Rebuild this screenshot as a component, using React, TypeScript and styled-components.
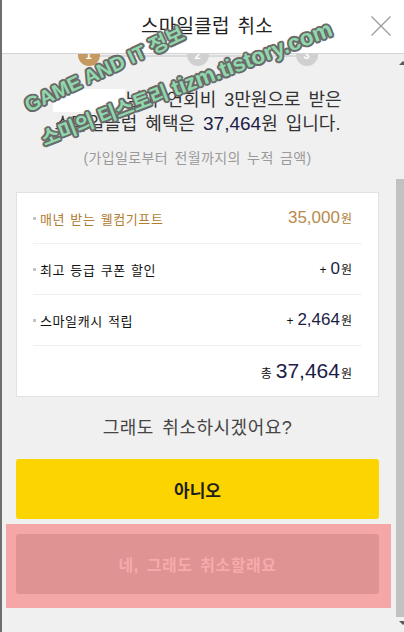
import React from 'react';
import styled, { createGlobalStyle } from 'styled-components';

const GlobalStyle = createGlobalStyle`
  html, body { margin: 0; padding: 0; background: #f0f0f0; overflow: hidden; }
  body { font-family: "Liberation Sans", "Noto Sans CJK KR", sans-serif; }
  * { box-sizing: border-box; }
`;

const Page = styled.div`
  position: relative;
  display: flex;
  width: 404px;
  height: 632px;
  overflow: hidden;
  background: #f0f0f0;
`;

const LeftEdge = styled.div`
  width: 2px;
  flex: none;
  background: #6e6e6e;
`;

const Main = styled.div`
  flex: 1;
  min-width: 0;
  display: flex;
  flex-direction: column;
`;

const Header = styled.header`
  position: relative;
  z-index: 2;
  height: 54px;
  flex: none;
  background: #fff;
  border-bottom: 1px solid #d4d4d4;
  display: grid;
  grid-template-columns: 1fr auto 1fr;
  align-items: center;
  padding: 0 13px 0 21px;
`;

const Title = styled.h1`
  grid-column: 2;
  margin: 0;
  font-size: 19px;
  font-weight: 400;
  color: #222;
  line-height: 24px;
  letter-spacing: 0.3px;
  word-spacing: 2px;
`;

const CloseButton = styled.button`
  grid-column: 3;
  justify-self: end;
  width: 20px;
  height: 20px;
  padding: 0;
  border: none;
  background: none;
  display: flex;
  margin-top: -2px;
`;

const Body = styled.div`
  flex: 1;
  display: flex;
  min-height: 0;
`;

const Content = styled.div`
  flex: 1;
  display: flex;
  flex-direction: column;
  padding: 0 17px 0 14px;
`;

const Steps = styled.div`
  position: relative;
  z-index: 0;
  align-self: center;
  width: 240px;
  margin-top: -10px;
  display: flex;
  justify-content: space-between;
  &::before {
    content: '';
    position: absolute;
    left: 11px;
    right: 11px;
    top: 11px;
    height: 2px;
    background: #d9d9d9;
  }
`;

const StepDot = styled.span<{ $active?: boolean }>`
  position: relative;
  width: 22px;
  height: 22px;
  border-radius: 50%;
  background: ${(p) => (p.$active ? '#c69a5e' : '#d0d0d0')};
  color: #fff;
  font-size: 11px;
  font-weight: 700;
  display: flex;
  align-items: center;
  justify-content: center;
`;

const Message = styled.p`
  margin: 22px 0 0;
  text-align: center;
  font-size: 18px;
  line-height: 24px;
  color: #333;
  word-spacing: 3px;
`;

const Redacted = styled.span`
  display: inline-block;
  width: 72px;
  height: 23px;
  background: #fff;
  vertical-align: top;
  margin-top: 1px;
`;

const Amount = styled.span`
  color: #1c1c48;
  font-size: 19px;
`;

const Note = styled.p`
  margin: 12px 0 0;
  text-align: center;
  font-size: 14px;
  line-height: 20px;
  color: #9a9a9a;
  letter-spacing: 0.4px;
  word-spacing: 2px;
`;

const Card = styled.div`
  margin-top: 24px;
  background: #fff;
  border: 1px solid #e2e2e2;
  padding: 0 16px;
`;

const Row = styled.div<{ $tone?: 'gold' }>`
  height: 51px;
  display: flex;
  align-items: center;
  justify-content: space-between;
  padding-right: 10px;
  border-bottom: 1px solid #f0f0f0;
  color: ${(p) => (p.$tone === 'gold' ? '#b07d33' : '#111')};
  &:last-child {
    height: 50px;
    border-bottom: none;
    justify-content: flex-end;
  }
`;

const Label = styled.span`
  display: flex;
  align-items: center;
  gap: 4px;
  font-size: 13px;
  letter-spacing: 0.6px;
  word-spacing: 1px;
`;

const Bullet = styled.i`
  width: 3px;
  height: 3px;
  background: #c4c4c4;
`;

const Value = styled.span`
  display: flex;
  align-items: baseline;
`;

const Prefix = styled.span`
  font-size: 12px;
  margin-right: 4px;
  color: #111;
`;

const Num = styled.span<{ $big?: boolean; $tone?: 'gold' }>`
  font-size: ${(p) => (p.$big ? '21px' : '17px')};
  color: ${(p) => (p.$tone === 'gold' ? '#b88a4c' : '#1c1c48')};
  margin-left: ${(p) => (p.$big ? '4px' : '0')};
`;

const Unit = styled.span<{ $tone?: 'gold' }>`
  font-size: 12px;
  margin-left: 1px;
  color: ${(p) => (p.$tone === 'gold' ? '#b07d33' : '#111')};
`;

const Question = styled.p`
  margin: 19px 0 0;
  text-align: center;
  font-size: 18px;
  line-height: 24px;
  color: #444;
  letter-spacing: 0.5px;
  word-spacing: 3px;
`;

const KeepButton = styled.button`
  margin-top: 19px;
  width: 100%;
  height: 60px;
  border: none;
  border-radius: 3px;
  background: #fcd400;
  color: #1e1e1e;
  font-family: inherit;
  font-size: 17px;
  font-weight: 700;
`;

const Highlight = styled.div`
  margin: 5px -12px 0 -10px;
  padding: 10px 12px 14px 10px;
  background: #f5a7a7;
`;

const CancelButton = styled.button`
  width: 100%;
  height: 60px;
  border: none;
  border-radius: 3px;
  background: #e09393;
  color: #f7aaaa;
  font-family: inherit;
  font-size: 16px;
  font-weight: 700;
  letter-spacing: 0.5px;
  word-spacing: 3px;
`;

const Scrollbar = styled.div`
  width: 8px;
  flex: none;
  display: flex;
  flex-direction: column;
  overflow: hidden;
`;

const Arrow = styled.span<{ $down?: boolean }>`
  flex: none;
  width: 0;
  height: 0;
  margin: ${(p) => (p.$down ? '4px 0 0 3px' : '7px 0 0 3px')};
  border-left: 4px solid transparent;
  border-right: 4px solid transparent;
  ${(p) => (p.$down ? 'border-top: 4px solid #5a5a5a;' : 'border-bottom: 4px solid #5a5a5a;')}
`;

const Thumb = styled.div`
  flex: none;
  margin-top: 114px;
  height: 438px;
  background: #c1c1c1;
`;

const Watermark = styled.span<{ $angle: number; $size: number }>`
  position: absolute;
  z-index: 5;
  pointer-events: none;
  white-space: nowrap;
  font-family: "Liberation Sans", "Noto Sans CJK KR", sans-serif;
  font-weight: 700;
  font-size: ${(p) => p.$size}px;
  line-height: 1;
  color: #8fd8ab;
  transform-origin: 0 100%;
  transform: rotate(${(p) => p.$angle}deg);
  text-shadow:
    2px 0 0 #6a6a6a, -2px 0 0 #6a6a6a, 0 2px 0 #6a6a6a, 0 -2px 0 #6a6a6a,
    1.4px 1.4px 0 #6a6a6a, -1.4px -1.4px 0 #6a6a6a, 1.4px -1.4px 0 #6a6a6a, -1.4px 1.4px 0 #6a6a6a;
`;

const WatermarkLatin = styled.span`
  font-size: 1.12em;
`;

export default function App() {
  return (
    <>
      <GlobalStyle />
      <Page>
        <LeftEdge />
        <Main>
          <Header>
            <Title>스마일클럽 취소</Title>
            <CloseButton aria-label="닫기">
              <svg width="20" height="20" viewBox="0 0 20 20">
                <path d="M0.5 0.5 L19.5 19.5 M19.5 0.5 L0.5 19.5" stroke="#9a9a9a" strokeWidth="1.2" fill="none" />
              </svg>
            </CloseButton>
          </Header>
          <Body>
            <Content>
              <Steps>
                <StepDot $active>1</StepDot>
                <StepDot>2</StepDot>
                <StepDot>3</StepDot>
              </Steps>
              <Message>
                <Redacted />님이 연회비 3만원으로 받은
                <br />
                스마일클럽 혜택은 <Amount>37,464</Amount>원 입니다.
              </Message>
              <Note>(가입일로부터 전월까지의 누적 금액)</Note>
              <Card>
                <Row $tone="gold">
                  <Label>
                    <Bullet />
                    매년 받는 웰컴기프트
                  </Label>
                  <Value>
                    <Num $tone="gold">35,000</Num>
                    <Unit $tone="gold">원</Unit>
                  </Value>
                </Row>
                <Row>
                  <Label>
                    <Bullet />
                    최고 등급 쿠폰 할인
                  </Label>
                  <Value>
                    <Prefix>+</Prefix>
                    <Num>0</Num>
                    <Unit>원</Unit>
                  </Value>
                </Row>
                <Row>
                  <Label>
                    <Bullet />
                    스마일캐시 적립
                  </Label>
                  <Value>
                    <Prefix>+</Prefix>
                    <Num>2,464</Num>
                    <Unit>원</Unit>
                  </Value>
                </Row>
                <Row>
                  <Value>
                    <Unit>총</Unit>
                    <Num $big>37,464</Num>
                    <Unit>원</Unit>
                  </Value>
                </Row>
              </Card>
              <Question>그래도 취소하시겠어요?</Question>
              <KeepButton>아니오</KeepButton>
              <Highlight>
                <CancelButton>네, 그래도 취소할래요</CancelButton>
              </Highlight>
            </Content>
            <Scrollbar>
              <Arrow />
              <Thumb />
              <Arrow $down />
            </Scrollbar>
          </Body>
        </Main>
        <Watermark $angle={-25} $size={20} style={{ left: 30, top: 95 }}>GAME AND IT 정보</Watermark>
        <Watermark $angle={-21} $size={20} style={{ left: 46, top: 128 }}>
          소미의 티스토리 <WatermarkLatin>tizm.tistory.com</WatermarkLatin>
        </Watermark>
      </Page>
    </>
  );
}
